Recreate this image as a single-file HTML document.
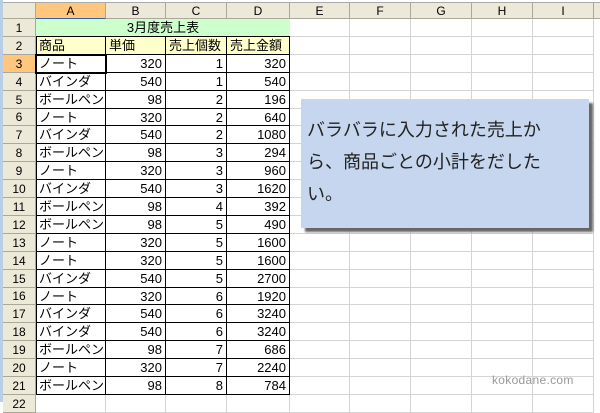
<!DOCTYPE html>
<html><head><meta charset="utf-8"><style>
body{margin:0;width:600px;height:402px;overflow:hidden;background:#fff;font-family:"Liberation Sans","Noto Sans CJK JP",sans-serif;position:relative}
.c{position:absolute;box-sizing:border-box;font-size:13px;line-height:17px;white-space:nowrap;overflow:hidden}
.h{background:#ECE9D8;border-right:1px solid #ACA899;border-bottom:1px solid #ACA899;text-align:center;font-size:12px;color:#000}
.g{border-right:1px solid #D4D4D4;border-bottom:1px solid #D4D4D4}
.t{border-right:1px solid #000;border-bottom:1px solid #000;padding:0 3px}
.r{text-align:right}
</style></head><body>
<div class="c" style="left:0;top:0;width:600px;height:3px;background:#fff;border-bottom:1px solid #aaa"></div>
<div class="c" style="left:0;top:0;width:3px;height:402px;background:#B9CDE5;z-index:5"></div>
<div id="g"></div>
<div class="c" style="left:301px;top:99px;width:288px;height:129px;background:#C5D6EE;box-shadow:4px 4px 2px #666;font-size:18px;line-height:32px;padding:15px 6px;white-space:nowrap;color:#222;z-index:6">バラバラに入力された売上か<br>ら、商品ごとの小計をだした<br>い。</div>
<div class="c" style="left:492px;top:372px;font-size:12px;color:#999;letter-spacing:0.3px;z-index:6">kokodane.com</div>
<script>
var cols=[36,106,166,227,290,350,411,472,533,594,640],names=["A","B","C","D","E","F","G","H","I",""];
var H0=3,H1=19,RH=17.9,h="";
h+='<div class="c h" style="left:3px;top:3px;width:33px;height:16px"></div>';
for(var i=0;i<10;i++){h+='<div class="c h" style="left:'+cols[i]+'px;top:3px;width:'+(cols[i+1]-cols[i])+'px;height:16px;'+(i==0?'background:#FFC77D;border-bottom:1px solid #3A5F9F':'')+'">'+names[i]+'</div>';}
var data=[["ノート",320,1,320],["バインダ",540,1,540],["ボールペン",98,2,196],["ノート",320,2,640],["バインダ",540,2,1080],["ボールペン",98,3,294],["ノート",320,3,960],["バインダ",540,3,1620],["ボールペン",98,4,392],["ボールペン",98,5,490],["ノート",320,5,1600],["ノート",320,5,1600],["バインダ",540,5,2700],["ノート",320,6,1920],["バインダ",540,6,3240],["バインダ",540,6,3240],["ボールペン",98,7,686],["ノート",320,7,2240],["ボールペン",98,8,784]];
for(var r=0;r<22;r++){
 var y=Math.round(H1+r*RH),y2=Math.round(H1+(r+1)*RH),hh=y2-y;
 h+='<div class="c h" style="left:3px;top:'+y+'px;width:33px;height:'+hh+'px;line-height:'+hh+'px;'+(r==2?'background:#FFC77D;border-right:1px solid #3A5F9F':'')+'">'+(r+1)+'</div>';
 for(var i=0;i<9;i++){
  var x=cols[i],w=cols[i+1]-x,st='left:'+x+'px;top:'+y+'px;width:'+w+'px;height:'+hh+'px;line-height:'+hh+'px;';
  if(r==0&&i<4){if(i==0)h+='<div class="c" style="left:36px;top:'+y+'px;width:254px;height:'+hh+'px;line-height:'+hh+'px;background:#CCFFCC;text-align:center;border-bottom:1px solid #000">3月度売上表</div>';continue;}
  if(r==1&&i<4){h+='<div class="c t" style="'+st+'background:#FFFFCC">'+["商品","単価","売上個数","売上金額"][i]+'</div>';continue;}
  if(r>=2&&r<21&&i<4){var v=data[r-2][i];h+='<div class="c t'+(i>0?' r':'')+'" style="'+st+'">'+v+'</div>';continue;}
  h+='<div class="c g" style="'+st+'"></div>';
 }
}
var y3=Math.round(H1+2*RH);
h+='<div class="c" style="left:35px;top:'+(y3-1)+'px;width:72px;height:20px;border:2px solid #000"></div>';
h+='<div class="c" style="left:36px;top:'+(Math.round(H1+RH)-1)+'px;width:1px;height:'+Math.round(20*RH)+'px;background:#000"></div>';
document.getElementById('g').innerHTML=h;
</script>
</body></html>
